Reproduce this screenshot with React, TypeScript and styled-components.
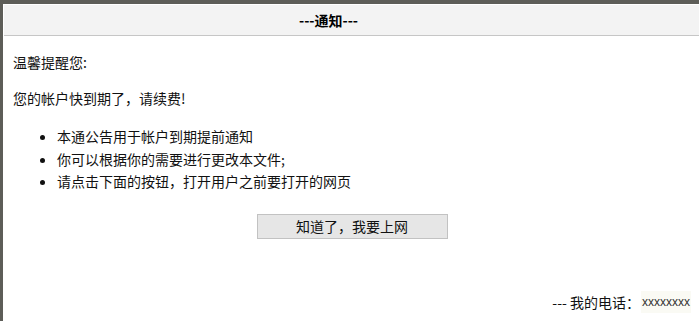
import React from "react";
import styled, { createGlobalStyle } from "styled-components";

const Global = createGlobalStyle`
  html, body { margin: 0; padding: 0; background: #fff; }
  body { font-family: "Noto Sans CJK SC", "Liberation Sans", sans-serif; color: #111; }
`;

const Page = styled.div`
  box-sizing: border-box;
  width: 699px;
  height: 321px;
  border-top: 4px solid #5d5d58;
  border-left: 3px solid #5d5d58;
  padding: 1px 0 0 1px;
  display: flex;
  flex-direction: column;
  overflow: hidden;
`;

const Header = styled.div`
  height: 30px;
  background: #f3f3f3;
  border-bottom: 1px solid #c6c6c6;
  display: flex;
  align-items: center;
  justify-content: center;
  padding-right: 46px;
  font-size: 14px;
  font-weight: bold;
  color: #000;
`;

const Content = styled.div`
  display: flex;
  flex-direction: column;
  padding: 0 8px 0 9px;
  font-size: 14px;
  line-height: 22px;
`;

const Line = styled.div<{ $top: number }>`
  margin-top: ${(p) => p.$top}px;
`;

const List = styled.ul`
  margin: 16px 0 0 0;
  padding: 0 0 0 44px;
  list-style: disc;
  line-height: 22.5px;
`;

const Button = styled.button`
  align-self: center;
  margin: 21px 0 0 0;
  width: 191px;
  height: 25px;
  background: #e6e6e6;
  border: 1px solid #c2c2c2;
  font-family: inherit;
  font-size: 14px;
  color: #111;
  padding: 0;
`;

const Footer = styled.div`
  margin-top: 52px;
  display: flex;
  justify-content: flex-end;
  align-items: center;
  gap: 1px;
`;

const Phone = styled.span`
  font-family: "Liberation Sans", sans-serif;
  font-size: 12px;
  background: #fafaf4;
  color: #333;
  padding: 0 1px;
`;

export default function App() {
  return (
    <>
      <Global />
      <Page>
        <Header>---通知---</Header>
        <Content>
          <Line $top={15}>温馨提醒您:</Line>
          <Line $top={14}>您的帐户快到期了，请续费!</Line>
          <List>
            <li>本通公告用于帐户到期提前通知</li>
            <li>你可以根据你的需要进行更改本文件;</li>
            <li>请点击下面的按钮，打开用户之前要打开的网页</li>
          </List>
          <Button>知道了，我要上网</Button>
          <Footer>
            <span>--- 我的电话：</span>
            <Phone>xxxxxxxx</Phone>
          </Footer>
        </Content>
      </Page>
    </>
  );
}
